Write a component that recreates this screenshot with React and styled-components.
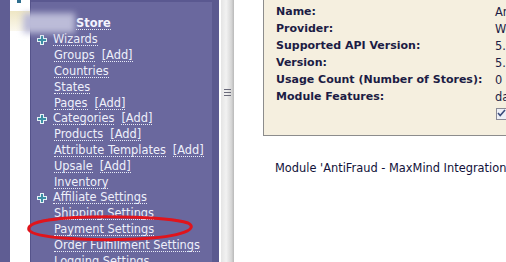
import React from 'react';
import styled, { createGlobalStyle } from 'styled-components';

const Global = createGlobalStyle`
  html, body { margin: 0; padding: 0; background: #fff; }
  body { font-family: "DejaVu Sans", Verdana, sans-serif; font-size: 11.4px; }
`;

const Page = styled.div`
  display: flex;
  height: 262px;
  width: 506px;
  overflow: hidden;
`;

const Strip = styled.div`
  width: 10px;
  background: #5f5d93;
  flex: none;
`;

const Gutter = styled.div`
  width: 20px;
  flex: none;
  background: #fff;
  display: flex;
  flex-direction: column;
`;

const Mark = styled.div`
  width: 4px;
  height: 3px;
  margin-left: 7px;
  background: #2f6f8f;
`;

const Fade = styled.div`
  height: 20px;
  margin-top: 8px;
  background: linear-gradient(#eee6c4, #fbf8ee);
`;

const Sidebar = styled.div`
  width: 181px;
  flex: none;
  background: #6a689e;
  border-left: 1px solid #55538a;
  display: flex;
  flex-direction: column;
  position: relative;
`;

const SideTop = styled.div`
  height: 7px;
  border-bottom: 2px solid #5a5890;
`;

const Tree = styled.ul`
  list-style: none;
  margin: 0;
  padding: 1px 0 0 7px;
`;

const Item = styled.li`
  display: flex;
  align-items: center;
  height: 15.8px;
  padding-left: ${p => (p.$root ? '0' : '16px')};
  white-space: nowrap;
`;

const Plus = styled.svg`
  width: 10px;
  height: 10px;
  margin: 0 6px 0 -1px;
  flex: none;
`;

const Link = styled.span`
  color: #eef0fb;
  border-bottom: 1px dotted #e8ecf8;
  line-height: 12px;
  margin-right: ${p => (p.$gap ? '7px' : '0')};
`;

const StoreRow = styled.div`
  display: flex;
  align-items: center;
  margin: 13px 0 0 -8px;
  height: 16px;
`;

const Blur = styled.span`
  width: 52px;
  height: 20px;
  background: #bcbcd8;
  filter: blur(3px);
  margin-right: 1px;
`;

const StoreText = styled.span`
  font-weight: bold;
  color: #f4f4ff;
  border-bottom: 1px dotted #e8ecf8;
  line-height: 12px;
`;

const Ring = styled.svg`
  position: absolute;
  left: -5px;
  top: 215px;
  width: 170px;
  height: 28px;
  pointer-events: none;
`;

const Edge = styled.div`
  width: 7px;
  flex: none;
  background: #5b598f;
`;

const Splitter = styled.div`
  width: 13px;
  flex: none;
  border-left: 2px solid #fff;
  background: linear-gradient(90deg, #e4e4e4, #f2f2f2 40%, #d6d6d6 80%, #b9b9b9);
  display: flex;
  justify-content: center;
  padding-top: 89px;
  box-sizing: content-box;
`;

const Grip = styled.div`
  width: 7px;
  height: 8px;
  background: repeating-linear-gradient(#6a6a7a 0 1px, transparent 1px 3px);
`;

const Main = styled.div`
  flex: 1;
  background: #fff;
  padding-left: 29px;
  min-width: 0;
`;

const Panel = styled.div`
  background: #f5efdf;
  border: 1px solid #8c8c8c;
  border-top: none;
  border-right: none;
  height: 136px;
  box-sizing: border-box;
  padding: 3px 0 0 12px;
  white-space: nowrap;
`;

const Row = styled.div`
  display: flex;
  height: 17px;
  align-items: center;
`;

const Label = styled.span`
  width: 219px;
  flex: none;
  font-weight: bold;
  font-size: 11px;
  color: #1c1c44;
`;

const Value = styled.span`
  color: #1c1c44;
`;

const Check = styled.span`
  margin-left: 220px;
  width: 12px;
  height: 12px;
  border: 1px solid #8a8a96;
  background: #eef0f6;
  box-sizing: border-box;
  display: flex;
  align-items: center;
  justify-content: center;
`;

const Note = styled.div`
  margin: 25px 0 0 12px;
  color: #11113a;
  white-space: nowrap;
`;

const PlusIcon = () => (
  <Plus viewBox="0 0 10 10">
    <path d="M3 0h4v3h3v4H7v3H3V7H0V3h3z" fill="#e4f0f4" />
    <path d="M4 1h2v3h3v2H6v3H4V6H1V4h3z" fill="#3a8ea4" />
  </Plus>
);

const items = [
  { label: 'Wizards', root: true },
  { label: 'Groups', add: true },
  { label: 'Countries' },
  { label: 'States' },
  { label: 'Pages', add: true },
  { label: 'Categories', add: true, root: true },
  { label: 'Products', add: true },
  { label: 'Attribute Templates', add: true },
  { label: 'Upsale', add: true },
  { label: 'Inventory' },
  { label: 'Affiliate Settings', root: true },
  { label: 'Shipping Settings' },
  { label: 'Payment Settings' },
  { label: 'Order Fulfillment Settings' },
  { label: 'Logging Settings' },
];

const fields = [
  ['Name:', 'AntiFraud - MaxMind Integration'],
  ['Provider:', 'WebSite'],
  ['Supported API Version:', '5.0'],
  ['Version:', '5.1'],
  ['Usage Count (Number of Stores):', '0'],
  ['Module Features:', 'data'],
];

export default function App() {
  return (
    <>
      <Global />
      <Page>
        <Strip />
        <Gutter>
          <Mark />
          <Fade />
        </Gutter>
        <Sidebar>
          <SideTop />
          <StoreRow>
            <Blur />
            <StoreText>Store</StoreText>
          </StoreRow>
          <Tree>
            {items.map(it => (
              <Item key={it.label} $root={it.root}>
                {it.root && <PlusIcon />}
                <Link $gap={it.add}>{it.label}</Link>
                {it.add && <Link>[Add]</Link>}
              </Item>
            ))}
          </Tree>
          <Ring viewBox="0 0 170 28">
            <path
              d="M22 5 C60 0 140 1 162 8 C172 13 160 22 110 24 C60 26 8 23 3 15 C1 10 10 6 32 4"
              fill="none"
              stroke="#e0141c"
              strokeWidth="3"
            />
          </Ring>
        </Sidebar>
        <Edge />
        <Splitter>
          <Grip />
        </Splitter>
        <Main>
          <Panel>
            {fields.map(([k, v]) => (
              <Row key={k}>
                <Label>{k}</Label>
                <Value>{v}</Value>
              </Row>
            ))}
            <Row>
              <Check>
                <svg width="9" height="9" viewBox="0 0 9 9">
                  <path d="M1 4l2.2 2.5L8 1" fill="none" stroke="#3c4c7c" strokeWidth="1.6" />
                </svg>
              </Check>
            </Row>
          </Panel>
          <Note>Module 'AntiFraud - MaxMind Integration' was successfully saved.</Note>
        </Main>
      </Page>
    </>
  );
}
